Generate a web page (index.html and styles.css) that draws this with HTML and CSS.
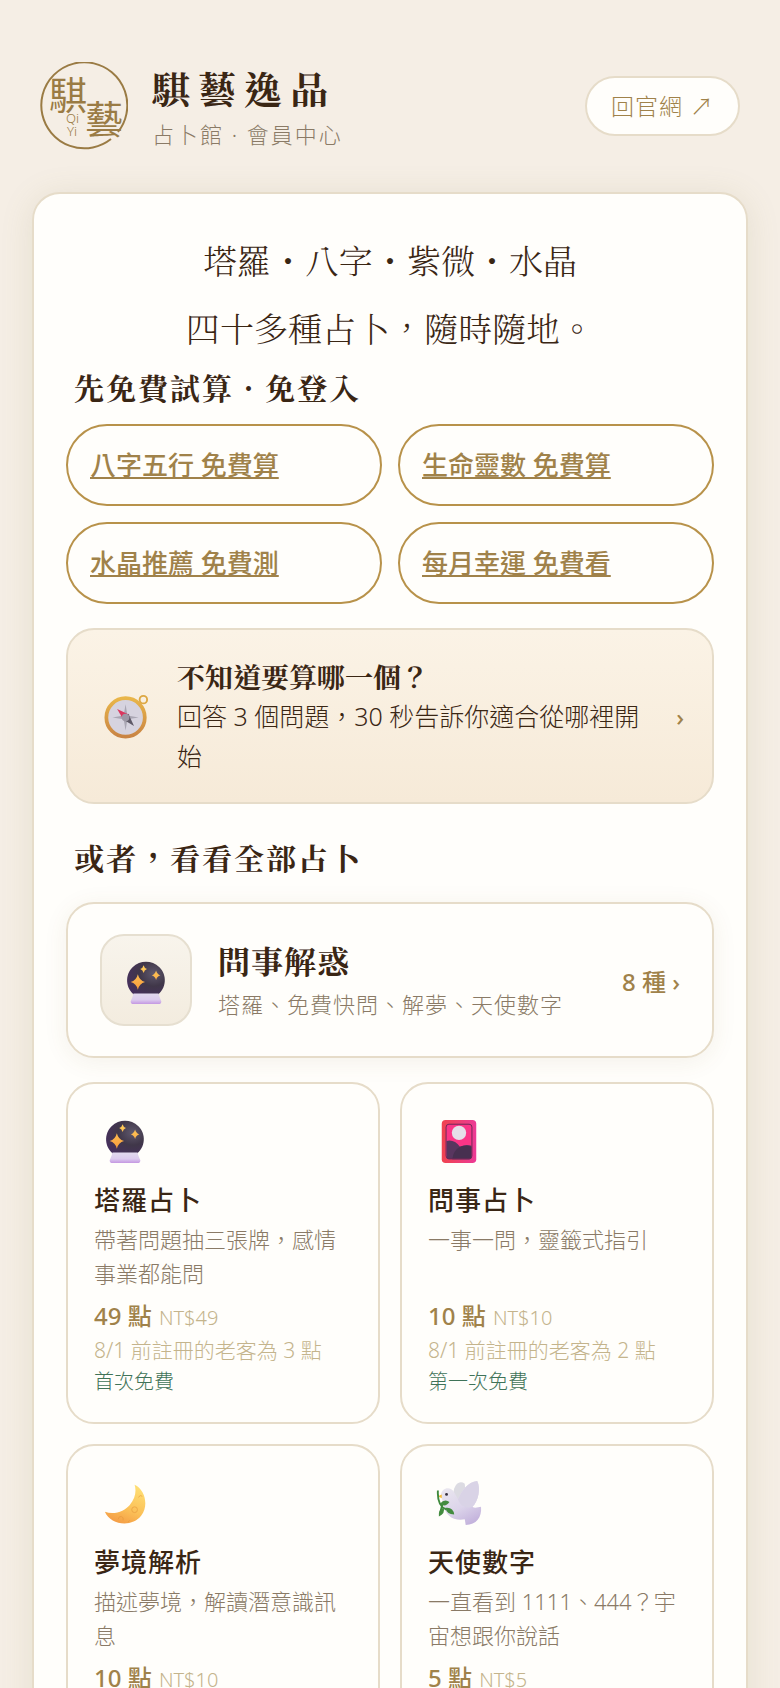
FILE: index.html
```html
<!DOCTYPE html>
<html lang="zh-Hant">
<head>
    <meta charset="UTF-8">
    <meta name="viewport" content="width=device-width, initial-scale=1.0">
    <title>騏藝逸品 占卜館</title>
    <link rel="stylesheet" href="styles.css">
</head>
<body>
    <!-- shared icons -->
    <svg class="defs" width="0" height="0" aria-hidden="true">
        <defs>
            <radialGradient id="ball" cx="0.7" cy="0.35" r="0.75">
                <stop offset="0" stop-color="#5f586c"/>
                <stop offset="0.5" stop-color="#403749"/>
                <stop offset="1" stop-color="#46305c"/>
            </radialGradient>
            <linearGradient id="stand" x1="0" y1="0" x2="0" y2="1">
                <stop offset="0" stop-color="#e2daee"/>
                <stop offset="0.6" stop-color="#dccbee"/>
                <stop offset="1" stop-color="#c497e2"/>
            </linearGradient>
            <linearGradient id="star" x1="0" y1="0" x2="0" y2="1">
                <stop offset="0" stop-color="#ffce5c"/>
                <stop offset="1" stop-color="#f99c3c"/>
            </linearGradient>
            <linearGradient id="card-bg">
                <stop offset="0" stop-color="#f0434f"/>
                <stop offset="1" stop-color="#ec3a96"/>
            </linearGradient>
            <linearGradient id="moon" x1="0.7" y1="0" x2="0.3" y2="1">
                <stop offset="0" stop-color="#ffdf74"/>
                <stop offset="0.6" stop-color="#fbc057"/>
                <stop offset="1" stop-color="#f49c45"/>
            </linearGradient>
            <linearGradient id="dove" x1="0.2" y1="0" x2="0.7" y2="1">
                <stop offset="0" stop-color="#eceaf0"/>
                <stop offset="0.6" stop-color="#dcd4ea"/>
                <stop offset="1" stop-color="#c3b2dc"/>
            </linearGradient>
            <linearGradient id="brass" x1="0" y1="0" x2="0" y2="1">
                <stop offset="0" stop-color="#e9b64a"/>
                <stop offset="1" stop-color="#c98444"/>
            </linearGradient>
            <symbol id="icon-crystal" viewBox="0 0 48 48">
                <path d="M13 38C2 31 2 16 10 8.500 18 1 30 1 38 8.500 46 16 46 31 35 38z" fill="url(#ball)"/>
                <path d="M11 36h26q1 4 3 8 0 3-3 3H11q-3 0-3-3 2-4 3-8z" fill="url(#stand)"/>
                <path d="M15.500 16q1.500 6.500 7.500 8-6 1.500-7.500 8-1.500-6.500-7.500-8 6-1.500 7.500-8zM34.500 12q1 4 4.500 5-3.500 1-4.500 5-1-4-4.500-5 3.500-1 4.500-5zM21.500 6.500q.7 3 3.500 4-2.800 1-3.500 4-.7-3-3.500-4 2.800-1 3.500-4z" fill="url(#star)"/>
            </symbol>
        </defs>
    </svg>

    <header class="site-header">
        <svg class="logo" viewBox="0 0 88 88" role="img" aria-label="騏藝 Qi Yi">
            <path d="M71 77A43 43 0 1 1 78 70" fill="none" stroke="#9a7b44" stroke-width="2"/>
            <text class="logo-zh" x="9" y="47">騏</text>
            <text class="logo-zh" x="45" y="71">藝</text>
            <text class="logo-en" x="26" y="61">Qi</text>
            <text class="logo-en" x="27" y="74">Yi</text>
        </svg>
        <div class="brand">
            <h1>騏藝逸品</h1>
            <p>占卜館 · 會員中心</p>
        </div>
        <a class="home-link" href="#">回官網 ↗</a>
    </header>

    <main class="panel">
        <p class="hero">塔羅・八字・紫微・水晶<br>四十多種占卜，隨時隨地。</p>

        <h2 class="free-heading">先免費試算 · 免登入</h2>
        <nav class="free-grid">
            <a href="#">八字五行 免費算</a>
            <a href="#">生命靈數 免費算</a>
            <a href="#">水晶推薦 免費測</a>
            <a href="#">每月幸運 免費看</a>
        </nav>

        <a class="guide" href="#">
            <svg class="guide-icon" viewBox="0 0 48 48" aria-hidden="true">
                <circle cx="42" cy="6" r="4" fill="none" stroke="#dda844" stroke-width="2"/>
                <circle cx="23" cy="25" r="20.500" fill="#d6d3df" stroke="url(#brass)" stroke-width="4"/>
                <path d="M23 11l2 12 12 2-12 2-2 12-2-12-12-2 12-2z" fill="#a9a6b3"/>
                <path d="M14 16l13 6-6 6z" fill="#d9375f"/>
                <path d="M32 34l-12-7 6-6z" fill="#5d5866"/>
                <circle cx="23" cy="25" r="4" fill="#9c98a5"/>
            </svg>
            <span class="guide-text">
                <strong>不知道要算哪一個？</strong>
                <span>回答 3 個問題，30 秒告訴你適合從哪裡開始</span>
            </span>
            <span class="guide-arrow">›</span>
        </a>

        <h2 class="all-heading">或者，看看全部占卜</h2>

        <a class="category" href="#">
            <span class="category-icon"><svg viewBox="0 0 48 48" aria-hidden="true"><use href="#icon-crystal"/></svg></span>
            <span class="category-text">
                <strong>問事解惑</strong>
                <span>塔羅、免費快問、解夢、天使數字</span>
            </span>
            <span class="category-count">8 種 ›</span>
        </a>

        <div class="cards">
            <a class="card" href="#">
                <svg class="card-icon" viewBox="0 0 48 48" aria-hidden="true"><use href="#icon-crystal"/></svg>
                <h3>塔羅占卜</h3>
                <p class="desc">帶著問題抽三張牌，感情事業都能問</p>
                <p class="price"><b>49 點</b> NT$49</p>
                <p class="legacy">8/1 前註冊的老客為 3 點</p>
                <p class="free">首次免費</p>
            </a>
            <a class="card" href="#">
                <svg class="card-icon" viewBox="0 0 48 48" aria-hidden="true">
                    <rect x="6" y="2" width="36" height="45" rx="4" fill="url(#card-bg)"/>
                    <rect x="10.500" y="6.500" width="27" height="36" rx="3" fill="#fa3587"/>
                    <path d="M11 24q8-2 14 6 6-3 12-1v12q0 2-2 2H13q-2 0-2-2z" fill="#58365f"/>
                    <path d="M17 43q1-9 8-13 6-2 12 0v11q0 2-2 2z" fill="#473050"/>
                    <rect x="10.500" y="6.500" width="27" height="36" rx="3" fill="none" stroke="#6b2957"/>
                    <circle cx="24" cy="15.500" r="7.500" fill="#e6dfe9"/>
                </svg>
                <h3>問事占卜</h3>
                <p class="desc">一事一問，靈籤式指引</p>
                <p class="price"><b>10 點</b> NT$10</p>
                <p class="legacy">8/1 前註冊的老客為 2 點</p>
                <p class="free">第一次免費</p>
            </a>
            <a class="card" href="#">
                <svg class="card-icon" viewBox="0 0 48 48" aria-hidden="true">
                    <path d="M34 5C45 10 49 27 41 37 31 50 9 47 3 33 13 37 24 32 29 26 35 19 36 11 34 5z" fill="url(#moon)"/>
                    <g fill="none" stroke="#e79a3e" opacity="0.7"><circle cx="34" cy="31" r="3"/><path d="M17 41q0-3 3-3 3 1 2 4M38 18q2-3 4-1M27 44l2-2"/></g>
                </svg>
                <h3>夢境解析</h3>
                <p class="desc">描述夢境，解讀潛意識訊息</p>
                <p class="price"><b>10 點</b> NT$10</p>
            </a>
            <a class="card" href="#">
                <svg class="card-icon" viewBox="0 0 48 48" aria-hidden="true">
                    <path d="M18 14C19 4 25 0 30 4L31 17 24 24z" fill="#dcdbe2"/>
                    <path d="M5 16C6 8 15 6 19 13L23 20C27 11 33 2 43 1 47 9 44 22 38 28 41 30 44 28 47 28 48 39 42 47 31 47L30 41C18 43 9 37 8 25z" fill="url(#dove)"/>
                    <path d="M23 20C27 11 33 2 43 1 47 9 44 22 38 28 32 30 25 27 23 20z" fill="#d9d3e6"/>
                    <path d="M2 17l4-2v4z" fill="#f5bc35"/>
                    <circle cx="11" cy="15" r="1.500" fill="#38313f"/>
                    <path d="M2 11q-1 16 9 20M7 24L4 36" fill="none" stroke="#3f8a3d" stroke-width="2"/>
                    <path d="M4 25q5-6 10-2-4 6-10 2zM10 29q8-1 9 7-8 0-9-7zM3 38q-1-7 5-9 2 6-5 9z" fill="#448c40"/>
                </svg>
                <h3>天使數字</h3>
                <p class="desc">一直看到 1111、444？宇宙想跟你說話</p>
                <p class="price"><b>5 點</b> NT$5</p>
            </a>
        </div>
    </main>
</body>
</html>
```
FILE: styles.css
```css
* {
    box-sizing: border-box;
}
body {
    margin: 0;
    padding: 0 32px 32px;
    background: #f5eee5;
    color: #3a2614;
    font-family: "Noto Sans", "Noto Sans CJK TC", sans-serif;
    font-weight: 300;
    font-size: 24px;
}
h1, h2, h3, p {
    margin: 0;
}
a {
    color: inherit;
    text-decoration: none;
}
h1, h2, .hero, .guide strong, .category strong {
    font-family: "Noto Serif TC", "Noto Serif CJK TC", "Noto Sans CJK TC", serif;
}
.defs {
    position: absolute;
}

/* header */
.site-header {
    display: flex;
    align-items: center;
    gap: 24px;
    padding: 60px 8px 40px;
}
.logo {
    width: 88px;
    height: 88px;
    flex: none;
}
.logo-zh {
    font-family: "Noto Sans CJK TC", sans-serif;
    font-size: 38px;
    font-weight: 400;
    fill: #9a7b44;
}
.logo-en {
    font-size: 13px;
    fill: #9a7b44;
}
.brand {
    flex: 1;
}
.brand h1 {
    font-size: 38px;
    line-height: 56px;
    letter-spacing: 8px;
}
.brand p {
    font-size: 22px;
    line-height: 36px;
    letter-spacing: 2px;
    color: #8a7a66;
}
.home-link {
    padding: 0 24px;
    border: 2px solid #e6dcc9;
    border-radius: 30px;
    background: #fffefb;
    color: #a0824a;
    font-size: 23px;
    line-height: 56px;
    letter-spacing: 1px;
}

/* main panel */
.panel {
    padding: 32px;
    border: 2px solid #e6dcc9;
    border-radius: 28px;
    background: #fffefb;
    box-shadow: 0 4px 32px rgba(140, 140, 80, 0.15);
}
.hero {
    font-size: 34px;
    line-height: 68px;
    text-align: center;
}
h2 {
    padding: 0 8px;
    font-size: 30px;
    line-height: 50px;
    letter-spacing: 2px;
}
.free-heading {
    margin-bottom: 12px;
}
.free-grid {
    display: grid;
    grid-template-columns: 1fr 1fr;
    gap: 16px;
}
.free-grid a {
    padding: 20px 22px;
    border: 2px solid #b8924a;
    border-radius: 41px;
    color: #a0824a;
    font-size: 26px;
    font-weight: 500;
    line-height: 38px;
    text-decoration: underline;
}

/* quiz banner */
.guide {
    display: flex;
    align-items: center;
    gap: 28px;
    margin: 24px 0 28px;
    padding: 26px 28px 26px 36px;
    border: 2px solid #e6dcc9;
    border-radius: 28px;
    background: linear-gradient(#fbf3e6, #f6ead8);
}
.guide-icon {
    width: 45px;
    height: 45px;
    flex: none;
}
.guide-text {
    flex: 1;
    font-size: 25px;
    line-height: 40px;
}
.guide strong, .category strong {
    display: block;
    font-weight: 700;
}
.guide strong {
    font-size: 28px;
}
.guide-arrow {
    color: #a0824a;
    font-weight: 500;
}

/* category row */
.category {
    display: flex;
    align-items: center;
    gap: 26px;
    margin: 20px 0 24px;
    padding: 30px 32px;
    border: 2px solid #e6dcc9;
    border-radius: 28px;
    box-shadow: 0 4px 24px rgba(120, 90, 40, 0.08);
}
.category-icon {
    display: flex;
    align-items: center;
    justify-content: center;
    width: 92px;
    height: 92px;
    border: 2px solid #e6dfd0;
    border-radius: 24px;
    background: linear-gradient(#f8f4ec, #f3ecdf);
}
.category-icon svg {
    width: 46px;
    height: 46px;
    margin-top: 4px;
}
.category-text {
    flex: 1;
    color: #8a7a66;
    font-size: 22px;
    line-height: 40px;
    letter-spacing: 1px;
}
.category strong {
    color: #3a2614;
    font-size: 32px;
    line-height: 48px;
}
.category-count {
    color: #a0824a;
    font-weight: 500;
}

/* service cards */
.cards {
    display: grid;
    grid-template-columns: 1fr 1fr;
    grid-auto-rows: 1fr;
    gap: 20px;
}
.card {
    padding: 34px 26px 24px;
    border: 2px solid #e6dcc9;
    border-radius: 28px;
}
.card-icon {
    display: block;
    width: 46px;
    height: 46px;
    margin-left: 8px;
}
.card h3 {
    margin-top: 14px;
    font-size: 26px;
    font-weight: 500;
    line-height: 44px;
    letter-spacing: 1px;
}
.desc {
    min-height: 68px;
    color: #8a7a66;
    font-size: 22px;
    line-height: 34px;
}
.price {
    margin-top: 10px;
    color: #c4b48c;
    font-size: 20px;
    line-height: 32px;
}
.price b {
    margin-right: 2px;
    color: #a0824a;
    font-size: 24px;
    font-weight: 500;
}
.legacy {
    color: #c4b48c;
    font-size: 21px;
    line-height: 32px;
}
.free {
    color: #3f7358;
    font-size: 20px;
    line-height: 32px;
}
```
